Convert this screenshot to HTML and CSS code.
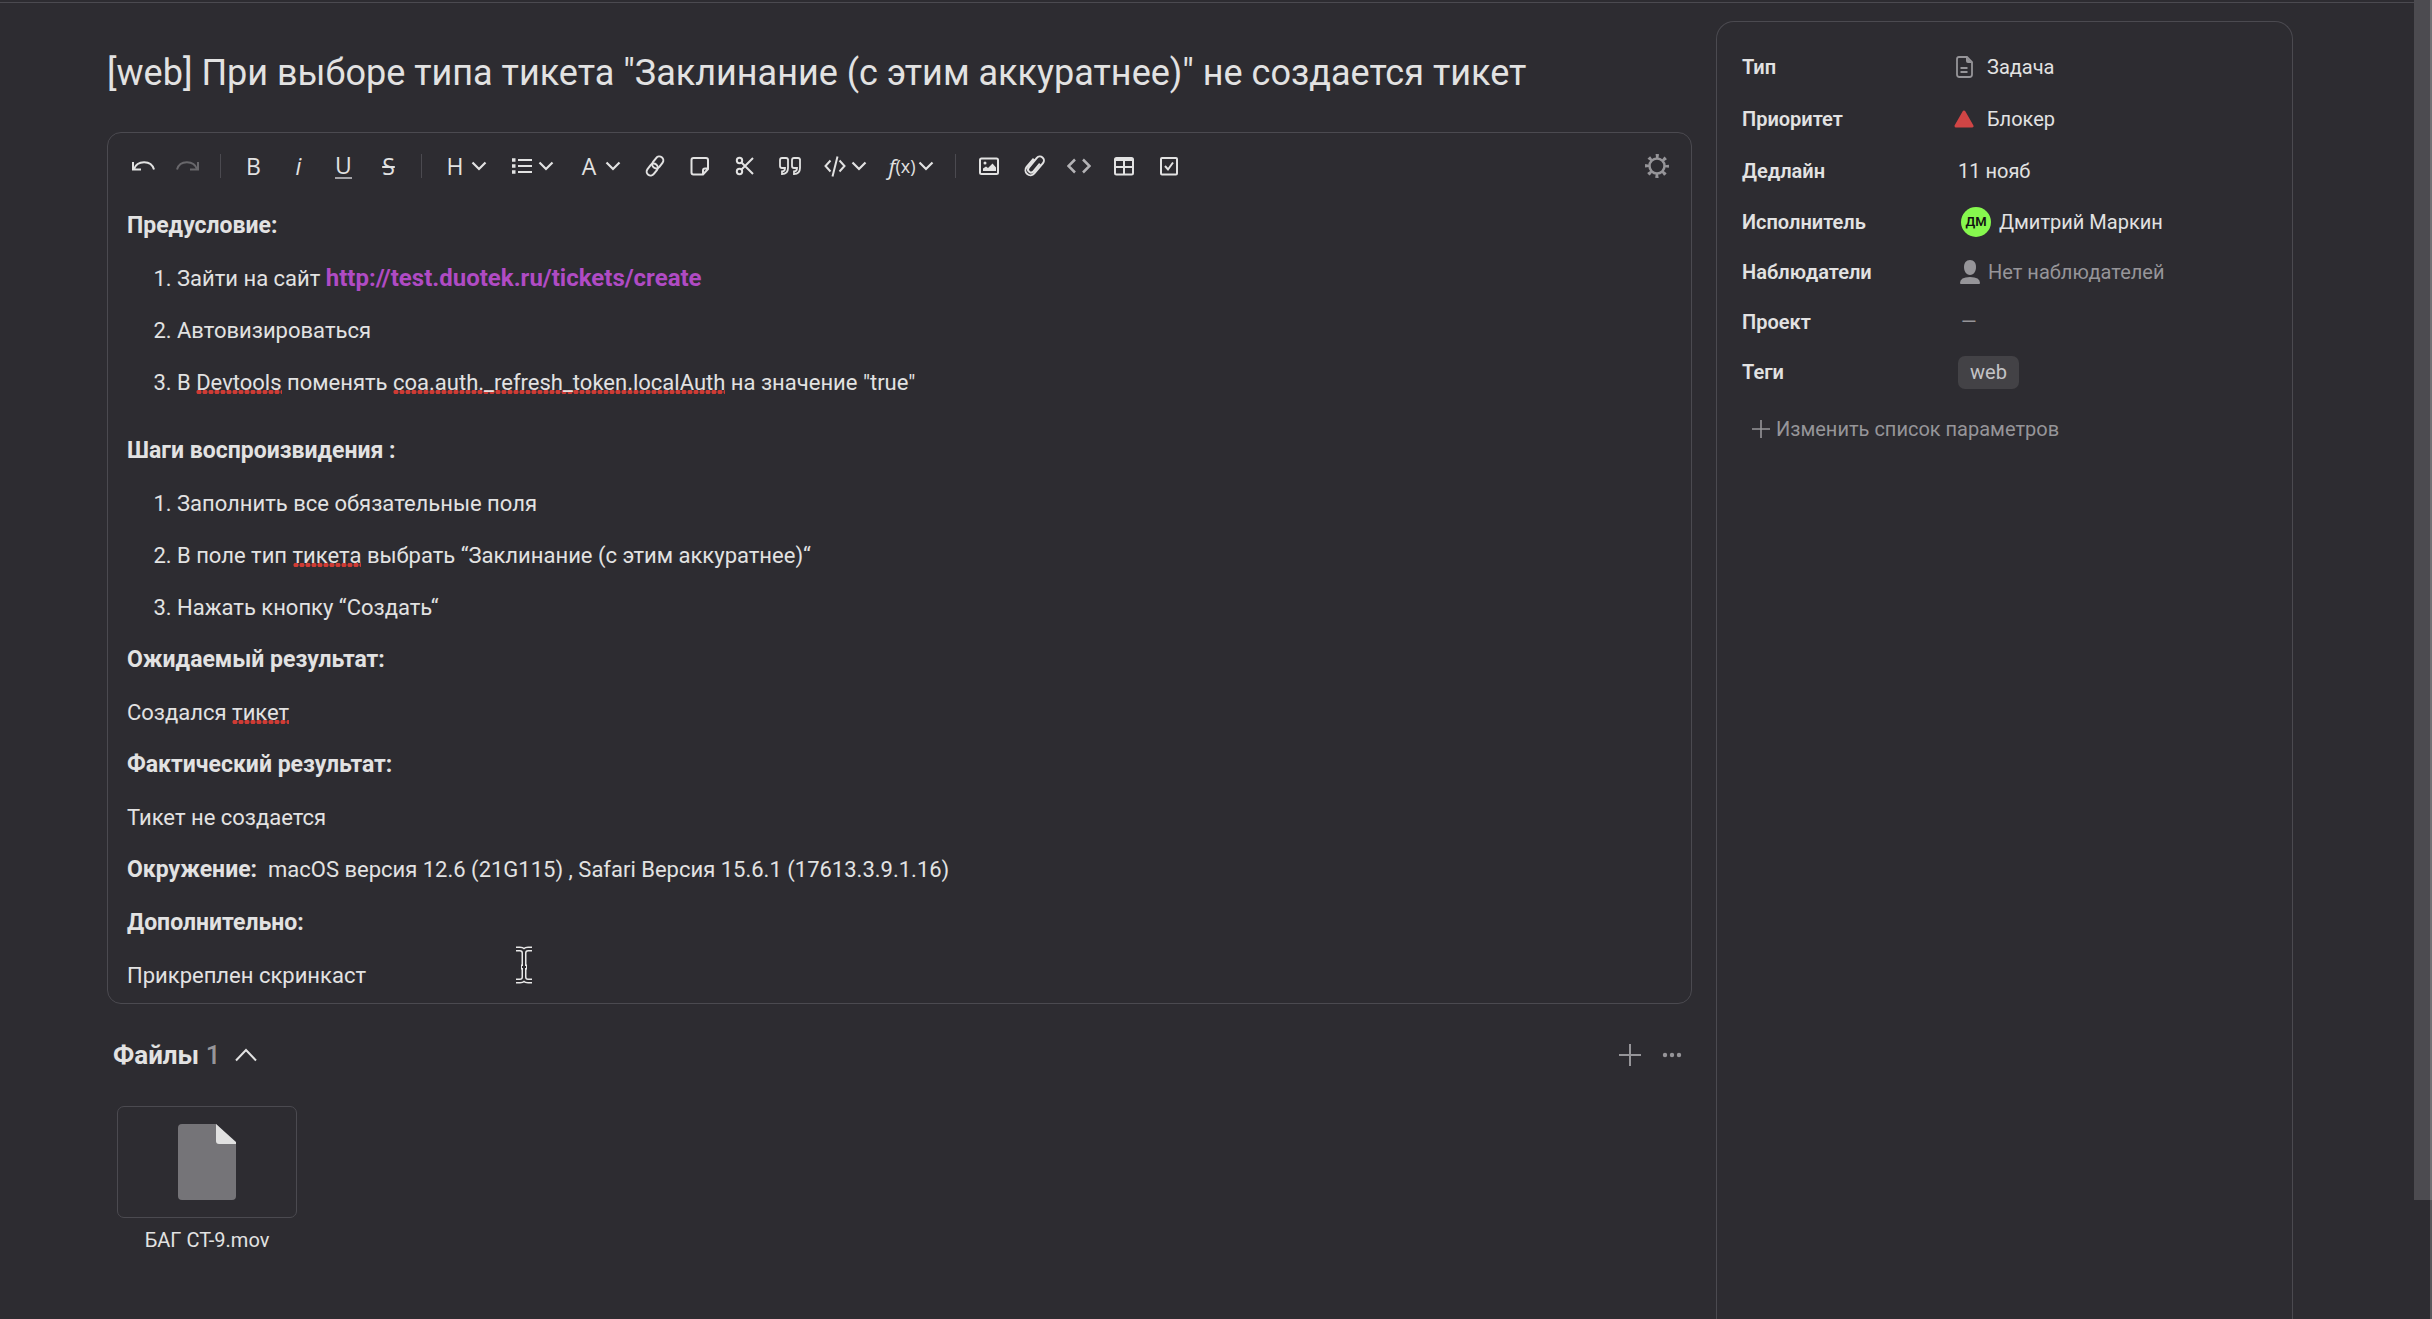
FILE: index.html
```html
<!DOCTYPE html>
<html lang="ru">
<head>
<meta charset="utf-8">
<title>Тикет</title>
<link rel="stylesheet" href="styles.css">
</head>
<body>
<svg class="defs" aria-hidden="true">
  <symbol id="chev" viewBox="0 0 16 10"><path d="M1.500 1.500 8 8l6.500-6.500" fill="none" stroke="currentColor" stroke-width="2.200"/></symbol>
</svg>
<div class="page">
  <main class="main">
    <h1 class="title">[web] При выборе типа тикета "Заклинание (с этим аккуратнее)" не создается тикет</h1>

    <section class="editor">
      <div class="toolbar" role="toolbar" aria-label="Форматирование">
        <button class="tool" aria-label="Отменить"><svg width="24" height="24" viewBox="0 0 24 24"><path d="M2 8v7.500h8M3 15C6 6.500 20 5.500 23 15.500"/></svg></button>
        <button class="tool" aria-label="Повторить" disabled><svg width="24" height="24" viewBox="0 0 24 24"><path d="M22 8v7.500h-8M21 15C18 6.500 4 5.500 1 15.500"/></svg></button>
        <span class="sep"></span>
        <button class="tool">B</button>
        <button class="tool"><i>i</i></button>
        <button class="tool"><span class="under">U</span></button>
        <button class="tool"><s>S</s></button>
        <span class="sep"></span>
        <button class="tool drop"><span class="glyph">H</span><svg class="chev" width="16" height="10"><use href="#chev"/></svg></button>
        <button class="tool drop" aria-label="Список"><span class="glyph"><svg width="20" height="18" viewBox="0 0 20 18"><path d="M6 3h14M6 9h14M6 15h14"/><path d="M0 3h3.500M0 9h3.500M0 15h3.500" stroke-width="3.500"/></svg></span><svg class="chev" width="16" height="10"><use href="#chev"/></svg></button>
        <button class="tool drop"><span class="glyph">A</span><svg class="chev" width="16" height="10"><use href="#chev"/></svg></button>
        <button class="tool" aria-label="Ссылка"><svg width="24" height="24" viewBox="0 0 24 24"><g transform="rotate(-52 12 12)"><rect x="1" y="8" width="13" height="8" rx="4"/><rect x="10" y="8" width="13" height="8" rx="4"/></g></svg></button>
        <button class="tool" aria-label="Заметка"><svg width="24" height="24" viewBox="0 0 24 24"><path d="M5.500 4h12.500q2 0 2 2v9l-5 5.500H5.500q-2 0-2-2V6q0-2 2-2zM20 14.500h-3q-2 0-2 2v4"/></svg></button>
        <button class="tool" aria-label="Вырезать"><svg width="24" height="24" viewBox="0 0 24 24"><circle cx="6.500" cy="6.500" r="2.700"/><circle cx="6.500" cy="17.500" r="2.700"/><path d="M8.500 8.500 20 20M20 4 8.500 15.500"/></svg></button>
        <button class="tool" aria-label="Цитата"><svg width="24" height="24" viewBox="0 0 24 24"><path d="M10 5v9q0 6-6 6v-2.500q3 0 3-3.500H4q-2 0-2-2V6q0-2 2-2h4q2 0 2 2" stroke-width="1.800"/><path d="M22 5v9q0 6-6 6v-2.500q3 0 3-3.500h-3q-2 0-2-2V6q0-2 2-2h4q2 0 2 2" stroke-width="1.800"/></svg></button>
        <button class="tool drop" aria-label="Код"><span class="glyph"><svg width="22" height="24" viewBox="0 0 22 24"><path d="M6.500 6.500 1.500 12l5 5.500M15.500 6.500l5 5.500-5 5.500M13.500 2.500l-5 20"/></svg></span><svg class="chev" width="16" height="10"><use href="#chev"/></svg></button>
        <button class="tool drop"><span class="glyph fx"><i>f</i><span>(x)</span></span><svg class="chev" width="16" height="10"><use href="#chev"/></svg></button>
        <span class="sep"></span>
        <button class="tool" aria-label="Изображение"><svg width="24" height="24" viewBox="0 0 24 24"><rect x="3" y="4.500" width="18" height="15.500" rx="1.500"/><path d="M6 17v-2.500l3-2 2 1.500 4.500-4.500 3.500 4V17z" fill="currentColor" stroke="none"/><circle cx="8" cy="9" r="1.500" fill="currentColor" stroke="none"/></svg></button>
        <button class="tool" aria-label="Файл"><svg width="24" height="26" viewBox="0 0 24 26"><g transform="rotate(40 12 13)"><path d="M15 8v10a3 3 0 0 1-6 0V5.500a4 4 0 0 1 8 0V19a5 5 0 0 1-10 0V8" transform="translate(0 -.5)"/></g></svg></button>
        <button class="tool dim" aria-label="HTML"><svg width="24" height="24" viewBox="0 0 24 24"><path d="M8 5.500 1.500 12 8 18.500M16 5.500l6.500 6.500-6.500 6.500" stroke-width="2.500"/></svg></button>
        <button class="tool" aria-label="Таблица"><svg width="24" height="24" viewBox="0 0 24 24"><rect x="3" y="4" width="18" height="16.500" rx="1.500"/><path d="M3 5.500h18" stroke-width="3"/><path d="M12 5v15M3 13h18"/></svg></button>
        <button class="tool" aria-label="Чек-лист"><svg width="24" height="24" viewBox="0 0 24 24"><rect x="4" y="4" width="16" height="16.500" rx="1"/><path d="m8 12 3 3.500L16 8.500"/></svg></button>
        <button class="tool gear" aria-label="Настройки"><svg width="26" height="26" viewBox="0 0 26 26"><circle cx="13" cy="13" r="7.500" stroke-width="2.500"/><circle cx="13" cy="13" r="10" stroke-width="4" stroke-dasharray="3 4.850" stroke-dashoffset="1.500"/></svg></button>
      </div>

      <div class="text" contenteditable="true" spellcheck="false" role="textbox" aria-multiline="true" aria-label="Описание">
        <p class="head">Предусловие:</p>
        <ol class="first">
          <li>Зайти на сайт <a href="http://test.duotek.ru/tickets/create">http://test.duotek.ru/tickets/create</a></li>
          <li>Автовизироваться</li>
          <li>В <span class="typo">Devtools</span> поменять <span class="typo">coa.auth._refresh_token.localAuth</span> на значение "true"</li>
        </ol>
        <p class="head">Шаги воспроизвидения :</p>
        <ol>
          <li>Заполнить все обязательные поля</li>
          <li>В поле тип <span class="typo">тикета</span> выбрать “Заклинание (с этим аккуратнее)“</li>
          <li>Нажать кнопку “Создать“</li>
        </ol>
        <p class="head">Ожидаемый результат:</p>
        <p>Создался <span class="typo">тикет</span></p>
        <p class="head">Фактический результат:</p>
        <p>Тикет не создается</p>
        <p class="env"><b>Окружение:</b>&nbsp; macOS версия 12.6 (21G115) , Safari Версия 15.6.1 (17613.3.9.1.16)</p>
        <p class="head">Дополнительно:</p>
        <p>Прикреплен скринкаст</p>
      </div>
      <svg class="cursor" width="20" height="38" viewBox="0 0 20 38" aria-hidden="true"><path d="M2 3h4q4 0 4 4 0-4 4-4h4M2 35h4q4 0 4-4 0 4 4 4h4M10 6v26M7 21h6" fill="none" stroke="#e8e8e8" stroke-width="5"/><path d="M2 3h4q4 0 4 4 0-4 4-4h4M2 35h4q4 0 4-4 0 4 4 4h4M10 6v26M8 21h4" fill="none" stroke="#2b2a2e" stroke-width="2"/></svg>
    </section>

    <section class="files">
      <header class="files-head">
        <h2>Файлы <span class="count">1</span></h2>
        <button class="plain" aria-label="Свернуть"><svg width="22" height="14" viewBox="0 0 22 14"><path d="M1 12.500 11 2l10 10.500"/></svg></button>
        <button class="plain dim push" aria-label="Добавить"><svg width="24" height="24" viewBox="0 0 24 24"><path d="M12 1v22M1 12h22"/></svg></button>
        <button class="plain dim" aria-label="Ещё"><svg width="20" height="24" viewBox="0 0 20 24"><g fill="currentColor" stroke="none"><circle cx="3" cy="12" r="2.200"/><circle cx="10" cy="12" r="2.200"/><circle cx="17" cy="12" r="2.200"/></g></svg></button>
      </header>
      <figure class="file">
        <div class="preview"><svg width="58" height="76" viewBox="0 0 58 76"><path d="M4 0h34l20 20v52q0 4-4 4H4q-4 0-4-4V4q0-4 4-4z" fill="#757478" stroke="none"/><path d="M38 0l20 18v2H41q-3 0-3-3z" fill="#e1e1e1" stroke="none"/></svg></div>
        <figcaption>БАГ СТ-9.mov</figcaption>
      </figure>
    </section>
  </main>

  <aside class="side">
    <dl class="params">
      <div class="row"><dt>Тип</dt><dd class="iconed"><svg class="dim" width="18" height="24" viewBox="0 0 18 24"><path d="M4 2h8l5 5v12.500q0 2.500-2.500 2.500H4.500Q2 22 2 19.500V4q0-2 2-2zM5.500 13h7M5.500 17h7" stroke-width="1.800"/><path d="M11 2l6 6h-4q-2 0-2-2z" fill="currentColor" stroke="none"/></svg>Задача</dd></div>
      <div class="row"><dt>Приоритет</dt><dd class="iconed"><svg width="20" height="18" viewBox="0 0 20 18"><path d="M10 2 18 16H2z" fill="#d04545" stroke="#d04545" stroke-width="3" stroke-linejoin="round"/></svg>Блокер</dd></div>
      <div class="row"><dt>Дедлайн</dt><dd>11 нояб</dd></div>
      <div class="row"><dt>Исполнитель</dt><dd class="person"><span class="avatar">ДМ</span>Дмитрий Маркин</dd></div>
      <div class="row"><dt>Наблюдатели</dt><dd class="nobody"><svg width="20" height="24" viewBox="0 0 20 24"><g fill="currentColor" stroke="none"><path d="M10 0c4 0 6 3 6 7s-2 8-6 8-6-4-6-8 2-7 6-7z"/><path d="M0 23q0-6 10-6t10 6q0 1-1 1H1q-1 0-1-1z"/></g></svg>Нет наблюдателей</dd></div>
      <div class="row"><dt>Проект</dt><dd class="none">—</dd></div>
      <div class="row"><dt>Теги</dt><dd><span class="tag">web</span></dd></div>
    </dl>
    <button class="edit"><svg width="18" height="18" viewBox="0 0 18 18"><path d="M9 0v18M0 9h18" stroke-width="1.600"/></svg>Изменить список параметров</button>
  </aside>
  <div class="scroll"><div class="thumb"></div></div>
</div>
</body>
</html>
```
FILE: styles.css
```css
* { box-sizing: border-box; }
body {
  margin: 0;
  background: #2d2c31;
  color: #e2e2e2;
  font: 20px/28px Roboto, "Noto Sans", sans-serif;
}
button {
  padding: 0;
  border: 0;
  background: none;
  color: inherit;
  font: inherit;
}
svg { display: block; fill: none; stroke: currentColor; stroke-width: 2; flex: none; }
.defs { position: absolute; width: 0; height: 0; }
.dim { color: #969599; }

.page {
  display: flex;
  min-height: 100vh;
  padding: 2px 18px 0 107px;
  position: relative;
}
.page::before {
  content: "";
  position: absolute;
  inset: 2px 18px auto 0;
  border-top: 1px solid #4b4a50;
}
.main { flex: 1; min-width: 0; }
.title {
  margin: 0;
  padding: 47px 0 35px;
  font-size: 36px;
  line-height: 48px;
  font-weight: 400;
}

.editor {
  position: relative;
  border: 1px solid #4b4a50;
  border-radius: 14px;
}
.toolbar {
  display: flex;
  align-items: center;
  padding: 10px 12px 0;
}
.tool {
  display: flex;
  align-items: center;
  justify-content: center;
  width: 45px;
  height: 46px;
  font: 23px/28px "Open Sans", sans-serif;
}
.tool:disabled { color: #68676b; }
.under { line-height: 24px; border-bottom: 2px solid #a4a3a7; }
.drop { width: 66px; justify-content: flex-start; gap: 4px; }
.drop + .drop { margin-left: 1px; }
.glyph {
  display: flex;
  justify-content: center;
  width: 34px;
  margin-left: 6px;
}
.drop .chev { stroke: none; margin-left: -5px; }
.fx { font-size: 18px; }
.fx i { font-size: 22px; }
.sep { width: 1px; height: 24px; margin: 0 10px; background: #4b4a50; }
.tool.dim { color: #b4b3b6; }
.gear { margin-left: auto; color: #969599; }

.text {
  padding: 19px 19px 9px;
  font-size: 22px;
  line-height: 36px;
  outline: none;
}
.text p { margin: 0 0 16px; }
.text p:last-child { margin: 0; }
.text .head { font-size: 23px; font-weight: 700; margin-bottom: 17px; }
.text .env { margin-bottom: 17px; }
.text b { font-size: 23px; line-height: 24px; }
.text ol { margin: 0 0 16px; padding-left: 50px; }
.text .first { margin-bottom: 32px; }
.text li + li { margin-top: 16px; }
.text a { color: #b04bc4; font-size: 24px; font-weight: 700; line-height: 24px; text-decoration: none; }
.typo {
  background: radial-gradient(circle at 50% 50%, #cf3b34 2px, transparent 3px) 0 calc(100% - 1px) / 6px 4px repeat-x;
}
.cursor { position: absolute; left: 406px; top: 813px; }

.files { padding: 33px 10px 40px 6px; }
.files-head { display: flex; align-items: center; }
.files h2 { margin: 0 15px 0 0; font-size: 26px; line-height: 36px; }
.count { color: #969599; font-weight: 500; }
.plain + .plain { margin-left: 20px; }
.files .push { margin-left: auto; }
.file { width: 180px; margin: 33px 0 0 4px; text-align: center; }
.preview {
  display: flex;
  justify-content: center;
  align-items: center;
  height: 112px;
  border: 1px solid #4b4a50;
  border-radius: 7px;
}
.file figcaption { padding-top: 8px; }

.side {
  width: 577px;
  margin: 19px 121px 0 24px;
  padding: 19px 25px;
  border: 1px solid #4b4a50;
  border-bottom: 0;
  border-radius: 18px 18px 0 0;
}
.params { margin: 0; }
.row { display: flex; align-items: center; height: 50px; }
.row:nth-child(-n+3) { height: 52px; }
.row dt { width: 216px; font-weight: 600; }
.row dd { display: flex; align-items: center; margin: 0; }
.row .iconed { display: grid; grid-template-columns: 20px auto; justify-items: center; gap: 13px; margin-left: -4px; }
.person { gap: 8px; }
.avatar {
  width: 30px;
  height: 30px;
  margin-left: 3px;
  border-radius: 50%;
  background: #86f84e;
  color: #111;
  font-size: 13px;
  font-weight: 600;
  line-height: 30px;
  text-align: center;
}
.nobody { gap: 8px; color: #969599; }
.nobody svg { margin-left: 2px; }
.row .none { padding-left: 3px; color: #969599; }
.tag {
  padding: 2px 12px 3px;
  border-radius: 7px;
  background: #434246;
  color: #c4c4c6;
}
.edit {
  display: flex;
  align-items: center;
  gap: 6px;
  margin: 18px 0 0 10px;
  color: #969599;
}

.scroll {
  position: absolute;
  top: 0;
  right: 0;
  bottom: 0;
  width: 18px;
  border-right: 2px solid #59585b;
}
.thumb { width: 18px; height: 91%; background: #4c4b50; border-right: 2px solid #737275; }
```
